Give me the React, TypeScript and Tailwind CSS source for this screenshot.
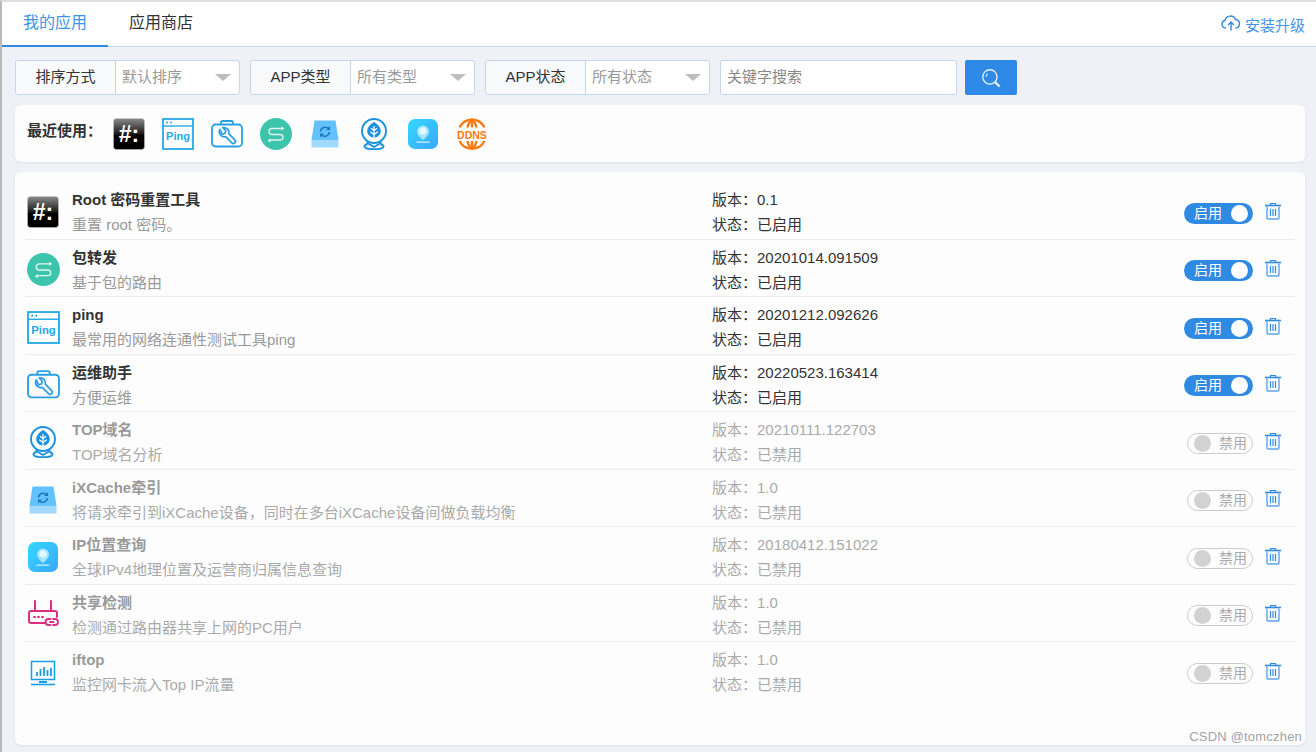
const FONT = '"Liberation Sans", "Noto Sans CJK SC", sans-serif';

function TerminalIcon({ size = 32 }: { size?: number }) {
  return (
    <svg width={size} height={size} viewBox="0 0 32 32">
      <defs>
        <linearGradient id="termGrad" x1="0" y1="0" x2="0" y2="1">
          <stop offset="0" stopColor="#8a8a8a" />
          <stop offset="0.5" stopColor="#1a1a1a" />
          <stop offset="0.55" stopColor="#000" />
          <stop offset="1" stopColor="#000" />
        </linearGradient>
      </defs>
      <rect x="0.5" y="0.5" width="31" height="31" rx="3" fill="url(#termGrad)" stroke="#c8c8c8" strokeWidth="0.5" />
      <text x="16" y="23.5" textAnchor="middle" fontSize="23" fontWeight="700" fill="#fff" fontFamily='"Liberation Sans", sans-serif'>#:</text>
    </svg>
  );
}

function PingIcon({ size = 32 }: { size?: number }) {
  return (
    <svg width={size} height={size} viewBox="0 0 32 32">
      <rect x="1" y="1" width="30" height="30" fill="#fff" stroke="#25a9e6" strokeWidth="1.8" />
      <path d="M1 8h30" stroke="#25a9e6" strokeWidth="1.4" />
      <circle cx="5" cy="4.5" r="1" fill="#25a9e6" />
      <circle cx="9" cy="4.5" r="1" fill="#25a9e6" />
      <text x="16" y="22" textAnchor="middle" fontSize="11" fontWeight="700" fill="#25a9e6" fontFamily='"Liberation Sans", sans-serif'>Ping</text>
    </svg>
  );
}

function ToolboxIcon({ size = 32 }: { size?: number }) {
  return (
    <svg width={size} height={size} viewBox="0 0 32 32" fill="none" stroke="#2b9fe4" strokeWidth="1.8" strokeLinejoin="round">
      <rect x="1" y="6.5" width="30" height="22" rx="3.5" />
      <path d="M10 6.5V4.5a1.5 1.5 0 0 1 1.5-1.5h9a1.5 1.5 0 0 1 1.5 1.5v2" />
      <path d="M9 11.5a5.2 5.2 0 0 0 .8 6 5.2 5.2 0 0 0 5 1.2l6 6.2a2.1 2.1 0 0 0 3-3l-6-6.2a5.2 5.2 0 0 0-1.3-4.8 5.2 5.2 0 0 0-4.7-1.2l3 3-.8 2.8-2.8.8z" strokeWidth="1.7" />
    </svg>
  );
}

function RouteIcon({ size = 32 }: { size?: number }) {
  return (
    <svg width={size} height={size} viewBox="0 0 32 32">
      <circle cx="16" cy="16" r="16" fill="#3dc4ac" />
      <path d="M22.5 10.5H12a3 3 0 0 0-3 3a3 3 0 0 0 3 3h8a3 3 0 0 1 3 3a2.5 2.5 0 0 1-2.5 2.5H9.5" fill="none" stroke="#dff5f0" strokeWidth="1.3" strokeLinecap="round" />
      <path d="M21.5 8.5l3 2-3 2z" fill="#dff5f0" />
      <path d="M10.5 20.5l-3 2 3 2z" fill="#dff5f0" />
    </svg>
  );
}

function CacheIcon({ size = 32 }: { size?: number }) {
  return (
    <svg width={size} height={size} viewBox="0 0 32 32">
      <path d="M5.5 2.5h21L29.5 22h-27z" fill="#63c1fb" />
      <rect x="2.5" y="22" width="27" height="7.5" fill="#a2dafd" />
      <path d="M11.5 13.5a4.8 4.8 0 0 1 8-3" fill="none" stroke="#1f77b8" strokeWidth="1.5" />
      <path d="M21 8v4h-4z" fill="#1f77b8" />
      <path d="M20.5 14a4.8 4.8 0 0 1-8 3" fill="none" stroke="#1f77b8" strokeWidth="1.5" />
      <path d="M11 19.5v-4h4z" fill="#1f77b8" />
    </svg>
  );
}

function TopIcon({ size = 32 }: { size?: number }) {
  return (
    <svg width={size} height={size} viewBox="0 0 32 32" fill="none" stroke="#1b92de" strokeWidth="1.9">
      <circle cx="16" cy="13" r="12" />
      <path d="M9.5 26c-2.5 1-3.5 1.800-2.800 3C7.5 30.300 11 31.200 16 31.200s8.500-.9 9.300-2.200c.7-1.200-.3-2-2.800-3" />
      <path d="M8.500 24.500l7.500 4.500 7.500-4.500" />
      <path d="M16 4c4.200 2.600 6.800 5.500 6.800 9 0 3.800-3 6.200-6.800 6.800-3.800-.6-6.800-3-6.800-6.800 0-3.500 2.600-6.400 6.800-9z" fill="#1b92de" stroke="none" />
      <path d="M16 8v13M16 12.500l-3-2.200M16 12.500l3-2.200M16 16.500l-3.800-2.700M16 16.500l3.800-2.700" stroke="#fff" strokeWidth="1.2" />
    </svg>
  );
}

function LocationIcon({ size = 32 }: { size?: number }) {
  return (
    <svg width={size} height={size} viewBox="0 0 32 32">
      <defs>
        <linearGradient id="locGrad" x1="0" y1="0" x2="1" y2="1">
          <stop offset="0" stopColor="#34d8ff" />
          <stop offset="1" stopColor="#39a8fb" />
        </linearGradient>
      </defs>
      <rect x="1" y="1" width="30" height="30" rx="7" fill="url(#locGrad)" />
      <path d="M16 7.5a6 6 0 0 1 6 6c0 3.6-3.6 6.4-6 8.500-2.400-2.100-6-4.900-6-8.500a6 6 0 0 1 6-6z" fill="#a5e6ff" />
      <circle cx="16" cy="13" r="3.6" fill="#e4f8ff" />
      <rect x="9.5" y="23.5" width="13" height="1.3" fill="#cfeeff" />
    </svg>
  );
}

function DdnsIcon({ size = 32 }: { size?: number }) {
  return (
    <svg width={size} height={size} viewBox="0 0 32 32">
      <g fill="none" stroke="#ff7a12" strokeWidth="2.4">
        <path d="M3.5 9.5a14 14 0 0 1 25 0" />
        <path d="M3.5 23a14 14 0 0 0 25 0" />
        <path d="M16 1.5V9.5M16 23v7.5" />
        <path d="M11.5 9.500c.6-3.500 2-6 4.500-8 2.500 2 3.900 4.500 4.500 8" />
        <path d="M11.500 23c.6 3.500 2 6 4.500 7.500 2.500-1.500 3.900-4 4.500-7.500" />
      </g>
      <text x="16" y="20.5" textAnchor="middle" fontSize="10.5" fontWeight="700" fill="#ff7a12" fontFamily='"Liberation Sans", sans-serif'>DDNS</text>
    </svg>
  );
}

function RouterIcon({ size = 32 }: { size?: number }) {
  return (
    <svg width={size} height={size} viewBox="0 0 32 32" fill="none" stroke="#dc2f80" strokeWidth="2" strokeLinecap="round">
      <path d="M8 2v10M24 2v10" />
      <path d="M19 24H4a2 2 0 0 1-2-2v-8a2 2 0 0 1 2-2h24a2 2 0 0 1 2 2v4" />
      <path d="M7 18h1M11 18h1M15 18h1" />
      <path d="M23.5 20h-2a3 3 0 0 0 0 6h2M26 20h2a3 3 0 0 1 0 6h-2M23 23h3.5" strokeWidth="1.8" />
    </svg>
  );
}

function MonitorIcon({ size = 32 }: { size?: number }) {
  return (
    <svg width={size} height={size} viewBox="0 0 32 32" fill="none" stroke="#1a9fe8">
      <rect x="4.5" y="4.5" width="23" height="18" strokeWidth="1.5" />
      <path d="M10 19v-4M13.5 19v-7M17 19v-9M20.5 19v-6M24 19v-8" strokeWidth="1.8" />
      <path d="M12 25h8" strokeWidth="2" />
      <path d="M4 27.5h24" strokeWidth="1.6" />
    </svg>
  );
}

function TrashIcon() {
  return (
    <svg width="18" height="18" viewBox="0 0 18 18" fill="none" stroke="#2f8ae4">
      <path d="M1 3.5h16" strokeWidth="1.6" />
      <path d="M6.5 3V1.5h5V3" strokeWidth="1.2" />
      <path d="M3 4.500V16a1 1 0 0 0 1 1h10a1 1 0 0 0 1-1V4.500" strokeWidth="1.4" stroke="#5ea2ec" />
      <path d="M6.500 7v7M9 7v7M11.500 7v7" strokeWidth="1.2" />
    </svg>
  );
}

function Caret() {
  return <span className="block w-0 h-0 border-x-[8px] border-x-transparent border-t-[7px] border-t-[#bdbdbd]" />;
}

function FilterSelect({ label, value }: { label: string; value: string }) {
  return (
    <div className="flex h-[35px] w-[225px] rounded-[3px] border border-[#c4d6ec] bg-white">
      <div className="w-[100px] shrink-0 flex items-center justify-center bg-[#f8f9fb] border-r border-[#c4d6ec] rounded-l-[3px] text-[15px] text-[#333]">
        {label}
      </div>
      <div className="flex-1 flex items-center justify-between pl-[6px] pr-[8px] text-[15px] text-[#999]">
        <span className="pb-[1px]">{value}</span>
        <Caret />
      </div>
    </div>
  );
}

interface AppRow {
  name: string;
  desc: string;
  version: string;
  enabled: boolean;
  icon: JSX.Element;
}

const rows: AppRow[] = [
  { name: 'Root 密码重置工具', desc: '重置 root 密码。', version: '0.1', enabled: true, icon: <TerminalIcon /> },
  { name: '包转发', desc: '基于包的路由', version: '20201014.091509', enabled: true, icon: <RouteIcon size={33} /> },
  { name: 'ping', desc: '最常用的网络连通性测试工具ping', version: '20201212.092626', enabled: true, icon: <PingIcon size={33} /> },
  { name: '运维助手', desc: '方便运维', version: '20220523.163414', enabled: true, icon: <ToolboxIcon size={33} /> },
  { name: 'TOP域名', desc: 'TOP域名分析', version: '20210111.122703', enabled: false, icon: <TopIcon /> },
  { name: 'iXCache牵引', desc: '将请求牵引到iXCache设备，同时在多台iXCache设备间做负载均衡', version: '1.0', enabled: false, icon: <CacheIcon /> },
  { name: 'IP位置查询', desc: '全球IPv4地理位置及运营商归属信息查询', version: '20180412.151022', enabled: false, icon: <LocationIcon /> },
  { name: '共享检测', desc: '检测通过路由器共享上网的PC用户', version: '1.0', enabled: false, icon: <RouterIcon /> },
  { name: 'iftop', desc: '监控网卡流入Top IP流量', version: '1.0', enabled: false, icon: <MonitorIcon /> },
];

function Toggle({ enabled }: { enabled: boolean }) {
  if (enabled) {
    return (
      <div className="w-[69px] h-[21px] rounded-full bg-[#2f8ae4] flex items-center justify-between pl-[10px] pr-[5px] text-[14px] text-white">
        <span>启用</span>
        <span className="w-[17px] h-[17px] rounded-full bg-white" />
      </div>
    );
  }
  return (
    <div className="w-[66px] h-[21px] rounded-full border border-[#ccc] flex items-center justify-between pl-[6px] pr-[5px] text-[14px] text-[#aaa]">
      <span className="w-[17px] h-[17px] rounded-full bg-[#d2d2d2]" />
      <span>禁用</span>
    </div>
  );
}

function Row({ app, last }: { app: AppRow; last: boolean }) {
  return (
    <div className={`flex h-[57.5px] ${last ? '' : 'border-b border-[#e9ebee]'}`}>
      <div className="w-[47px] shrink-0 flex items-center pl-[2px] pt-[4px]">{app.icon}</div>
      <div className="w-[640px] shrink-0 pt-[5px] text-[15px] leading-[25px]">
        <div className={`font-bold ${app.enabled ? 'text-[#333]' : 'text-[#999]'}`}>{app.name}</div>
        <div className={app.enabled ? 'text-[#999]' : 'text-[#aaa]'}>{app.desc}</div>
      </div>
      <div className={`flex-1 pt-[5px] text-[15px] leading-[25px] ${app.enabled ? 'text-[#333]' : 'text-[#aaa]'}`}>
        <div>版本：{app.version}</div>
        <div>状态：{app.enabled ? '已启用' : '已禁用'}</div>
      </div>
      <div className="shrink-0 flex items-center gap-[11px] pr-[13px] pt-[6px]">
        <Toggle enabled={app.enabled} />
        <span className="pb-[5px]"><TrashIcon /></span>
      </div>
    </div>
  );
}

export default function App() {
  return (
    <div style={{ fontFamily: FONT }} className="relative w-[1316px] h-[752px] overflow-hidden bg-[#eff1f6] border-l-2 border-t-2 border-l-[#b9b9b9] border-t-[#dedede]">
      {/* Tabs */}
      <div className="flex items-start justify-between h-[45px] bg-white border-b border-[#c4d6ec]">
        <div className="flex">
          <div className="w-[106px] h-[45px] border-b-2 border-[#2f8ae4] text-[16px] leading-[41px] text-[#3f93e8] pl-[21px]">我的应用</div>
          <div className="text-[16px] leading-[41px] text-[#333] pl-[21px]">应用商店</div>
        </div>
        <div className="flex items-center gap-[4px] pr-[11px] mt-[13px] text-[15px] text-[#3f93e8]">
          <svg width="20" height="17" viewBox="0 0 20 17" fill="none" stroke="#2f8ae4" strokeWidth="1.4" className="-mt-[6px]">
            <path d="M5 13H4.5a3.8 3.8 0 0 1-.5-7.5 5.5 5.5 0 0 1 10.500-1A4.300 4.300 0 0 1 15 13h-.5" />
            <path d="M10 15.5V7.5M7 10l3-3 3 3" />
          </svg>
          <span>安装升级</span>
        </div>
      </div>

      {/* Filters */}
      <div className="flex items-center pl-[13px] pt-[13px]">
        <div className="flex gap-[10px]">
          <FilterSelect label="排序方式" value="默认排序" />
          <FilterSelect label="APP类型" value="所有类型" />
          <FilterSelect label="APP状态" value="所有状态" />
        </div>
        <div className="ml-[10px] w-[237px] h-[35px] rounded-[2px] border border-[#c4d6ec] bg-white flex items-center pl-[6px] pb-[1px] text-[15px] text-[#888]">
          关键字搜索
        </div>
        <div className="ml-[8px] w-[52px] h-[35px] rounded-[2px] bg-[#2e8ae6] flex items-center justify-center">
          <svg width="22" height="22" viewBox="0 0 20 20" fill="none" stroke="#e8f3fe">
            <circle cx="9" cy="9" r="6.5" strokeWidth="1.2" />
            <path d="M13.8 13.8l4 4" strokeWidth="2" />
            <path d="M5.5 9a4 4 0 0 1 1.5-3" strokeWidth="1" />
          </svg>
        </div>
      </div>

      {/* Recently used */}
      <div className="ml-[13px] mr-[11px] mt-[10px] h-[57px] rounded-[6px] bg-[#fdfdfe] shadow-[0_1px_2px_rgba(180,190,210,0.3)] flex items-center pl-[12px]">
        <span className="w-[86px] -mt-[5px] text-[15px] font-bold text-[#333]">最近使用：</span>
        <div className="flex gap-[17px]">
          <TerminalIcon />
          <PingIcon />
          <ToolboxIcon />
          <RouteIcon />
          <CacheIcon />
          <TopIcon />
          <LocationIcon />
          <DdnsIcon />
        </div>
      </div>

      {/* App list */}
      <div className="ml-[13px] mr-[11px] mt-[10px] h-[573px] rounded-[6px] bg-[#fdfdfe] shadow-[0_1px_2px_rgba(180,190,210,0.3)] px-[10px] pt-[10px]">
        {rows.map((app, i) => (
          <Row key={app.name} app={app} last={i === rows.length - 1} />
        ))}
      </div>

      {/* Watermark */}
      <div className="absolute right-[14px] bottom-[6px] text-[13px] text-[#a3a3a3] tracking-[0.2px]">CSDN @tomczhen</div>
    </div>
  );
}
